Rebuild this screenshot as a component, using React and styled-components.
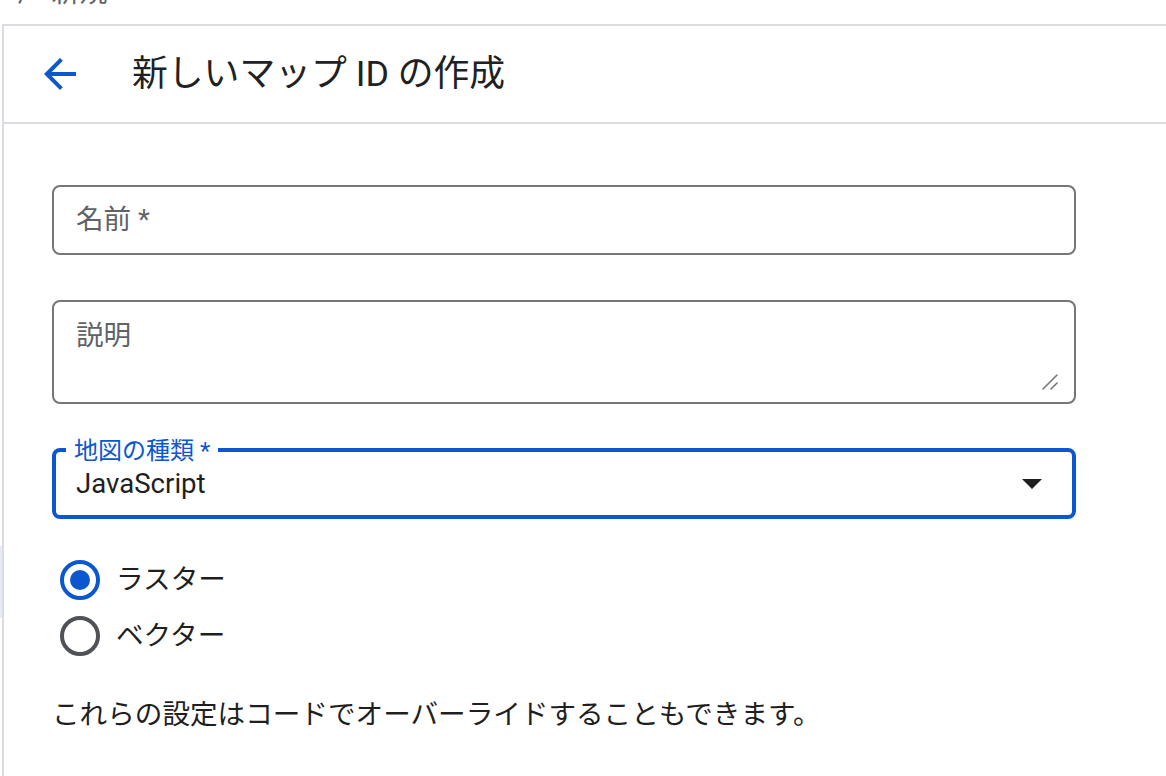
import React from "react";
import styled, { createGlobalStyle } from "styled-components";

const Global = createGlobalStyle`
  html, body { margin: 0; padding: 0; background: #ffffff; }
  body {
    width: 1166px;
    height: 776px;
    overflow: hidden;
    font-family: Roboto, "Noto Sans CJK JP", sans-serif;
    color: #1f1f1f;
  }
  * { box-sizing: border-box; }
`;

const Page = styled.div`
  display: flex;
  flex-direction: column;
  width: 1166px;
  height: 776px;
  overflow: hidden;
`;

const TopStrip = styled.div`
  height: 24px;
  flex: none;
  overflow: hidden;
  padding-left: 18px;
`;

const Crumbs = styled.div`
  display: flex;
  align-items: center;
  margin-top: -27px;
  height: 40px;
  font-size: 28px;
  line-height: 40px;
  color: #5f6368;
`;

const Sep = styled.span`
  margin-right: 22px;
`;

const Body = styled.div`
  flex: 1;
  display: flex;
  min-height: 0;
`;

const Sliver = styled.div`
  width: 2px;
  flex: none;
  display: flex;
  flex-direction: column;
`;

const SliverHighlight = styled.div`
  margin-top: 522px;
  height: 72px;
  background: #e5ecf8;
`;

const Panel = styled.section`
  flex: 1;
  border-left: 2px solid #dadce0;
  border-top: 2px solid #dadce0;
  background: #fff;
  display: flex;
  flex-direction: column;
`;

const Header = styled.header`
  height: 98px;
  flex: none;
  display: flex;
  align-items: center;
  padding-left: 32px;
  border-bottom: 2px solid #dadce0;
  gap: 48px;
`;

const BackButton = styled.button`
  width: 48px;
  height: 48px;
  padding: 0;
  border: none;
  background: transparent;
  display: flex;
  align-items: center;
  justify-content: center;
  cursor: pointer;
  svg { display: block; }
`;

const Title = styled.h1`
  margin: 0;
  font-size: 35.8px;
  font-weight: 400;
  line-height: 48px;
  color: #202124;
`;

const Form = styled.div`
  display: flex;
  flex-direction: column;
  padding: 61px 0 0 48px;
  width: 1072px;
  flex: none;
`;

const Field = styled.div`
  position: relative;
  height: ${(p) => p.$height}px;
  margin-top: ${(p) => p.$mt || 0}px;
  border: ${(p) => (p.$focused ? "4px solid #0b57d0" : "2px solid #747775")};
  border-radius: 8px;
  display: flex;
  align-items: ${(p) => (p.$multiline ? "flex-start" : "center")};
  padding: ${(p) =>
    p.$multiline ? "14px 22px 0" : p.$focused ? "0 30px 0 20px" : "0 22px"};
`;

const Placeholder = styled.span`
  font-size: 27.6px;
  line-height: 40px;
  color: #5f6368;
`;

const Value = styled.span`
  flex: 1;
  font-size: 27.6px;
  line-height: 40px;
  color: #1f1f1f;
`;

const FloatingLabel = styled.span`
  position: absolute;
  top: -13px;
  left: 10px;
  padding: 0 8px;
  background: #fff;
  font-size: 24px;
  line-height: 24px;
  color: #0b57d0;
`;

const ResizeHandle = styled.svg`
  position: absolute;
  right: 16px;
  bottom: 12px;
`;

const RadioGroup = styled.div`
  display: flex;
  flex-direction: column;
  margin-top: 33px;
`;

const RadioRow = styled.label`
  display: flex;
  align-items: center;
  height: 56px;
  padding-left: 8px;
  gap: 16px;
  cursor: pointer;
`;

const RadioCircle = styled.span`
  width: 40px;
  height: 40px;
  border-radius: 50%;
  border: 4px solid ${(p) => (p.$checked ? "#0b57d0" : "#4f5256")};
  display: flex;
  align-items: center;
  justify-content: center;
  &::after {
    content: "";
    width: 20px;
    height: 20px;
    border-radius: 50%;
    background: ${(p) => (p.$checked ? "#0b57d0" : "transparent")};
  }
`;

const RadioText = styled.span`
  font-size: 27.6px;
  line-height: 40px;
  color: #1f1f1f;
`;

const Note = styled.p`
  margin: 31px 0 0;
  font-size: 27.6px;
  line-height: 40px;
  color: #1f1f1f;
  white-space: nowrap;
`;

function ArrowBack() {
  return (
    <svg width="48" height="48" viewBox="0 0 24 24" aria-hidden="true">
      <path
        fill="#0b57d0"
        d="M20 11H7.83l5.59-5.59L12 4l-8 8 8 8 1.41-1.41L7.83 13H20v-2z"
      />
    </svg>
  );
}

function DropArrow() {
  return (
    <svg width="20" height="10" viewBox="0 0 20 10" aria-hidden="true">
      <path fill="#1f1f1f" d="M0 0h20L10 10z" />
    </svg>
  );
}

export default function App() {
  const [mode, setMode] = React.useState("raster");
  return (
    <>
      <Global />
      <Page>
        <TopStrip>
          <Crumbs>
            <Sep>/</Sep>
            <span>新規</span>
          </Crumbs>
        </TopStrip>
        <Body>
          <Sliver>
            <SliverHighlight />
          </Sliver>
          <Panel>
            <Header>
              <BackButton aria-label="戻る">
                <ArrowBack />
              </BackButton>
              <Title>新しいマップ ID の作成</Title>
            </Header>
            <Form>
              <Field $height={70}>
                <Placeholder>名前 *</Placeholder>
              </Field>
              <Field $height={104} $mt={45} $multiline>
                <Placeholder>説明</Placeholder>
                <ResizeHandle width="16" height="16" viewBox="0 0 16 16">
                  <path
                    d="M1 15L15 1M9 15L15 9"
                    stroke="#747775"
                    strokeWidth="1.6"
                    strokeLinecap="round"
                  />
                </ResizeHandle>
              </Field>
              <Field $height={71} $mt={44} $focused>
                <FloatingLabel>地図の種類 *</FloatingLabel>
                <Value>JavaScript</Value>
                <DropArrow />
              </Field>
              <RadioGroup>
                <RadioRow onClick={() => setMode("raster")}>
                  <RadioCircle $checked={mode === "raster"} />
                  <RadioText>ラスター</RadioText>
                </RadioRow>
                <RadioRow onClick={() => setMode("vector")}>
                  <RadioCircle $checked={mode === "vector"} />
                  <RadioText>ベクター</RadioText>
                </RadioRow>
              </RadioGroup>
              <Note>これらの設定はコードでオーバーライドすることもできます。</Note>
            </Form>
          </Panel>
        </Body>
      </Page>
    </>
  );
}
